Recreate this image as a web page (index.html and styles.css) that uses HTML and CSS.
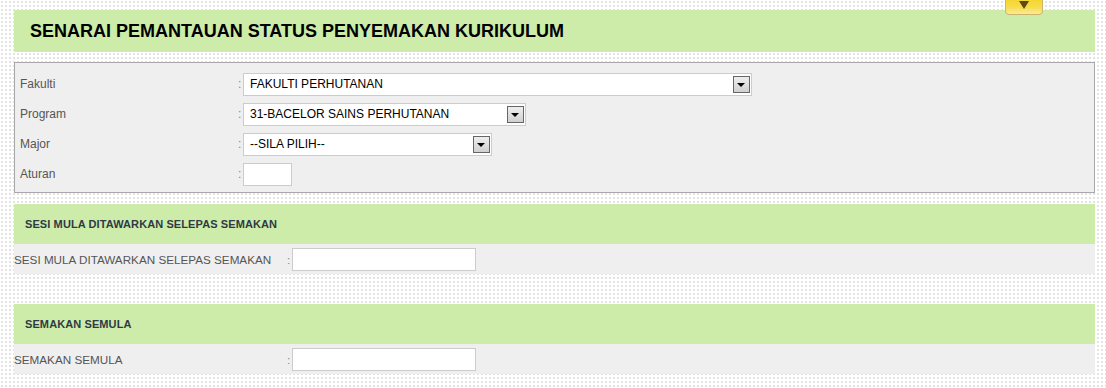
FILE: index.html
```html
<!DOCTYPE html>
<html lang="ms">
<head>
    <meta charset="UTF-8">
    <meta name="viewport" content="width=device-width, initial-scale=1.0">
    <title>Senarai Pemantauan Status Penyemakan Kurikulum</title>
    <link rel="stylesheet" href="styles.css">
</head>
<body>
<div class="toggle-tab">
    <svg width="10" height="8" viewBox="0 0 10 8"><polygon points="0,0 10,0 5,8" fill="#5b4a12"/></svg>
</div>

<div class="page">
    <div class="title-bar">SENARAI PEMANTAUAN STATUS PENYEMAKAN KURIKULUM</div>

    <div class="filter-box">
        <div class="filter-row">
            <span class="label">Fakulti</span>
            <span class="colon">:</span>
            <div class="select w-fakulti">
                <span>FAKULTI PERHUTANAN</span>
                <span class="arrow"></span>
            </div>
        </div>
        <div class="filter-row">
            <span class="label">Program</span>
            <span class="colon">:</span>
            <div class="select w-program">
                <span>31-BACELOR SAINS PERHUTANAN</span>
                <span class="arrow"></span>
            </div>
        </div>
        <div class="filter-row">
            <span class="label">Major</span>
            <span class="colon">:</span>
            <div class="select w-major">
                <span>--SILA PILIH--</span>
                <span class="arrow"></span>
            </div>
        </div>
        <div class="filter-row">
            <span class="label">Aturan</span>
            <span class="colon">:</span>
            <input type="text" class="text-input w-aturan">
        </div>
    </div>

    <div class="section">
        <div class="section-head">SESI MULA DITAWARKAN SELEPAS SEMAKAN</div>
        <div class="section-row">
            <span class="label">SESI MULA DITAWARKAN SELEPAS SEMAKAN</span>
            <span class="colon">:</span>
            <input type="text" class="text-input w-wide">
        </div>
    </div>

    <div class="section">
        <div class="section-head">SEMAKAN SEMULA</div>
        <div class="section-row">
            <span class="label">SEMAKAN SEMULA</span>
            <span class="colon">:</span>
            <input type="text" class="text-input w-wide">
        </div>
    </div>
</div>
</body>
</html>
```

FILE: styles.css
```css
/* Page layout for the curriculum review monitoring screen */
body {
    margin: 0;
    font-family: "Liberation Sans", Arial, sans-serif;
    font-size: 12px;
    color: #555;
    background-color: #fff;
    background-image: radial-gradient(#e3e3e3 0.8px, transparent 0.9px);
    background-size: 4px 4px;
    position: relative;
}
.page {
    padding: 10px 11px 0 14px;
}
.toggle-tab {
    position: absolute;
    top: -5px;
    left: 1005px;
    width: 38px;
    height: 20px;
    border: 1px solid #c9b46a;
    border-radius: 4px;
    background: linear-gradient(#f3d122, #f6dc4a 60%, #fbeb98);
    display: flex;
    justify-content: center;
    align-items: flex-start;
    padding-top: 5px;
    box-sizing: border-box;
}
.title-bar {
    height: 42px;
    background-color: #cdeba9;
    padding-left: 16px;
    display: flex;
    align-items: center;
    font-size: 18px;
    font-weight: bold;
    color: #000;
}
.filter-box {
    margin-top: 10px;
    border: 1px solid #a8a8a8;
    background-color: #efefef;
    padding: 6px 5px 3px 5px;
}
.filter-row {
    display: flex;
    align-items: center;
    height: 30px;
}
.filter-row .label {
    width: 218px;
}
.colon {
    width: 5px;
    color: #888;
}
.select {
    height: 23px;
    box-sizing: border-box;
    border: 1px solid #ccc;
    background-color: #fff;
    display: flex;
    align-items: center;
    justify-content: space-between;
    padding: 0 1px 0 6px;
    color: #000;
}
.arrow {
    width: 17px;
    height: 17px;
    box-sizing: border-box;
    border: 1px solid #666;
    background: linear-gradient(#eee, #d0d0d0);
    position: relative;
}
.arrow::after {
    content: "";
    position: absolute;
    left: 3px;
    top: 6px;
    border-left: 4px solid transparent;
    border-right: 4px solid transparent;
    border-top: 4px solid #000;
}
.w-fakulti { width: 509px; }
.w-program { width: 283px; }
.w-major { width: 249px; }
.text-input {
    height: 23px;
    box-sizing: border-box;
    border: 1px solid #ccc;
    background-color: #fff;
    margin: 0;
    padding: 0 4px;
}
.w-aturan { width: 49px; }
.w-wide { width: 184px; }
.section {
    margin-top: 11px;
}
.section + .section {
    margin-top: 30px;
}
.section-head {
    height: 40px;
    background-color: #cdeba9;
    padding-left: 11px;
    display: flex;
    align-items: center;
    font-size: 11px;
    letter-spacing: 0.1px;
    font-weight: bold;
    color: #2e3a46;
}
.section-row {
    height: 30px;
    background-color: #efefef;
    display: flex;
    align-items: center;
    font-size: 11.7px;
}
.section-row .label {
    width: 273px;
}
```
